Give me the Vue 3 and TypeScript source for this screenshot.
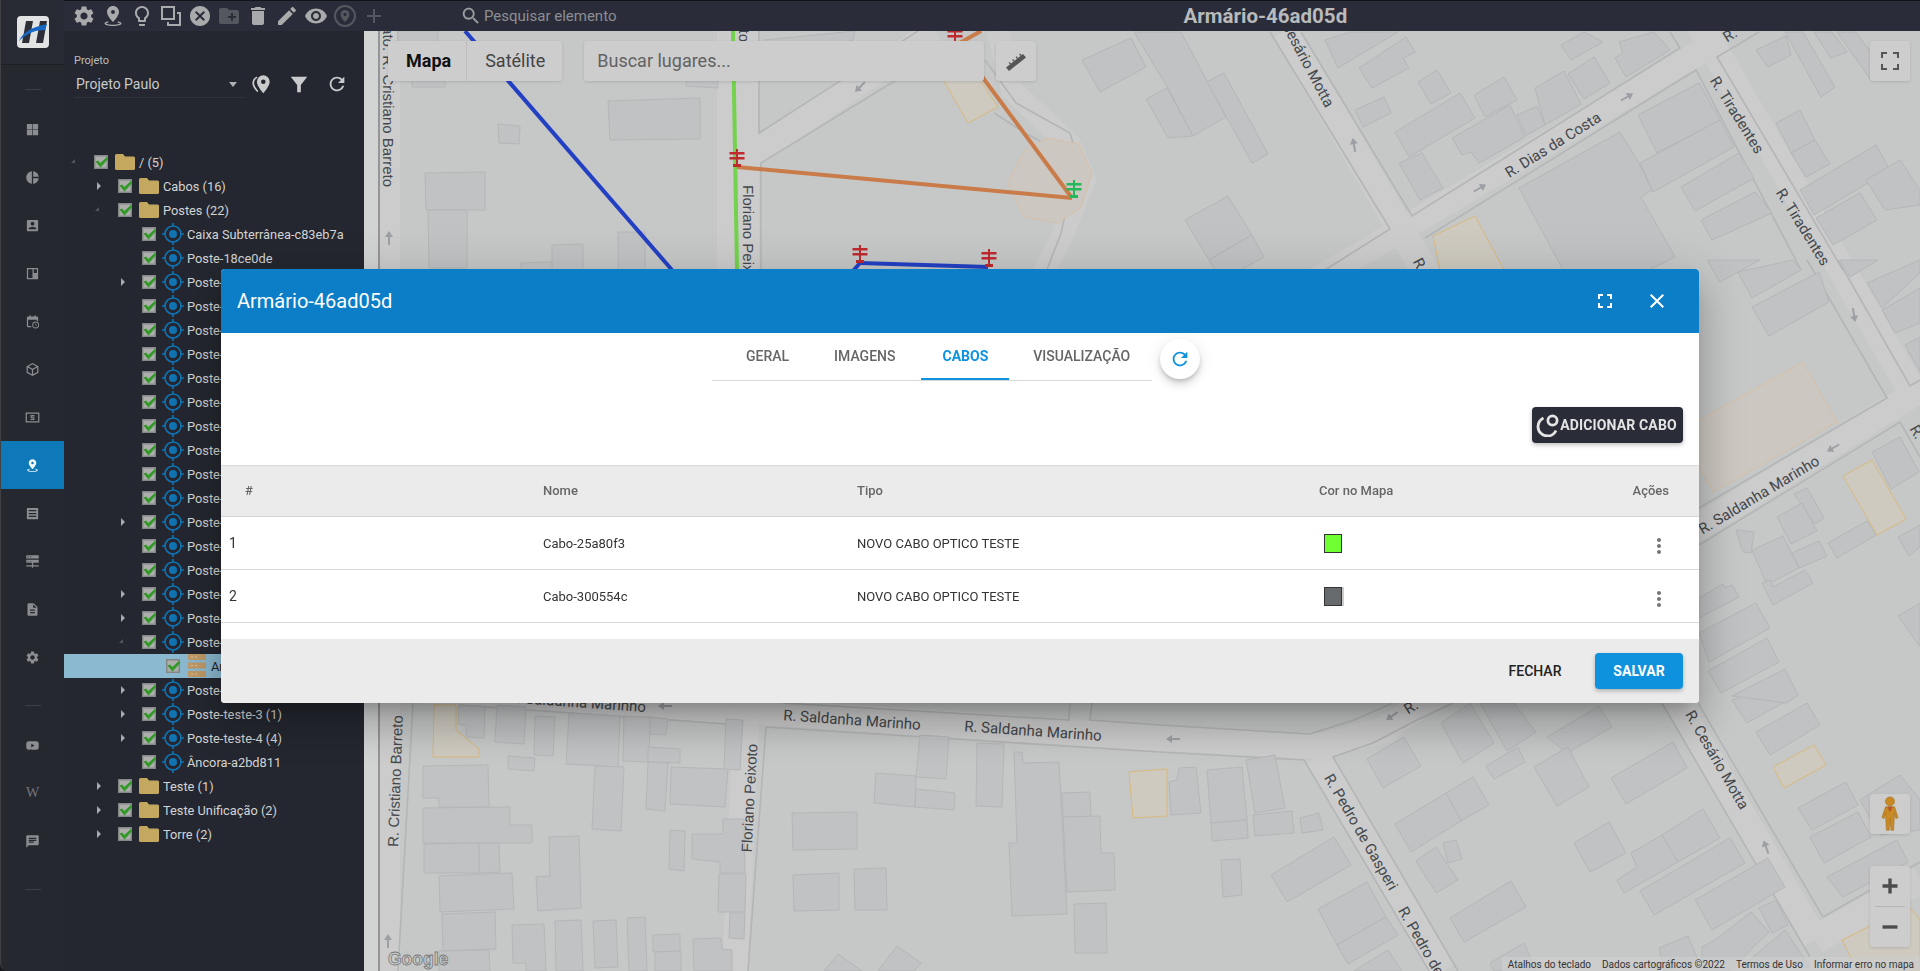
<script setup lang="ts">
const icons: Record<string, string> = {
  settings: 'M19.14 12.94c.04-.3.06-.61.06-.94 0-.32-.02-.64-.07-.94l2.03-1.58a.49.49 0 0 0 .12-.61l-1.92-3.32a.488.488 0 0 0-.59-.22l-2.39.96c-.5-.38-1.03-.7-1.62-.94l-.36-2.54a.484.484 0 0 0-.48-.41h-3.84c-.24 0-.43.17-.47.41l-.36 2.54c-.59.24-1.13.57-1.62.94l-2.39-.96c-.22-.08-.47 0-.59.22L2.74 8.87c-.12.21-.08.47.12.61l2.03 1.58c-.05.3-.09.63-.09.94s.02.64.07.94l-2.03 1.58a.49.49 0 0 0-.12.61l1.92 3.32c.12.22.37.29.59.22l2.39-.96c.5.38 1.03.7 1.62.94l.36 2.54c.05.24.24.41.48.41h3.84c.24 0 .44-.17.47-.41l.36-2.54c.59-.24 1.13-.56 1.62-.94l2.39.96c.22.08.47 0 .59-.22l1.92-3.32c.12-.22.07-.47-.12-.61l-2.01-1.58zM12 15.6c-1.98 0-3.6-1.62-3.6-3.6s1.62-3.6 3.6-3.6 3.6 1.62 3.6 3.6-1.62 3.6-3.6 3.6z',
  pinRing: 'M12 2c-3.3 0-6 2.7-6 6 0 4 6 10 6 10s6-6 6-10c0-3.3-2.7-6-6-6zm0 8a2 2 0 1 1 0-4 2 2 0 0 1 0 4zM7 17.2c-2 .5-3.5 1.3-3.5 2.3C3.5 21 7.3 22 12 22s8.5-1 8.5-2.5c0-1-1.5-1.8-3.5-2.3l-.6 1.2c1.5.3 2.4.8 2.4 1.1 0 .5-2.7 1.2-6.8 1.2s-6.8-.7-6.8-1.2c0-.3.9-.8 2.4-1.1z',
  bulb: 'M9 21c0 .55.45 1 1 1h4c.55 0 1-.45 1-1v-1H9v1zm3-19C8.14 2 5 5.14 5 9c0 2.38 1.19 4.47 3 5.74V17c0 .55.45 1 1 1h6c.55 0 1-.45 1-1v-2.26c1.81-1.27 3-3.36 3-5.74 0-3.86-3.14-7-7-7zm2.85 11.1l-.85.6V16h-4v-2.3l-.85-.6C7.8 12.16 7 10.63 7 9c0-2.76 2.24-5 5-5s5 2.24 5 5c0 1.63-.8 3.16-2.15 4.1z',
  squares: 'M2 2h14v14H2zM4 4v10h10V4zM18 8h4v14H8v-4h2v2h10V10h-2z',
  cancel: 'M12 2C6.47 2 2 6.47 2 12s4.47 10 10 10 10-4.47 10-10S17.53 2 12 2zm5 13.59L15.59 17 12 13.41 8.41 17 7 15.59 10.59 12 7 8.41 8.41 7 12 10.59 15.59 7 17 8.41 13.41 12 17 15.59z',
  newFolder: 'M20 6h-8l-2-2H4c-1.11 0-1.99.89-1.99 2L2 18c0 1.11.89 2 2 2h16c1.11 0 2-.89 2-2V8c0-1.11-.89-2-2-2zm-1 8h-3v3h-2v-3h-3v-2h3V9h2v3h3v2z',
  trash: 'M6 19c0 1.1.9 2 2 2h8c1.1 0 2-.9 2-2V7H6v12zM19 4h-3.5l-1-1h-5l-1 1H5v2h14V4z',
  edit: 'M3 17.25V21h3.75L17.81 9.94l-3.75-3.75L3 17.25zM20.71 7.04c.39-.39.39-1.02 0-1.41l-2.34-2.34c-.39-.39-1.02-.39-1.41 0l-1.83 1.83 3.75 3.75 1.83-1.83z',
  eye: 'M12 4.5C7 4.5 2.73 7.61 1 12c1.73 4.39 6 7.5 11 7.5s9.27-3.11 11-7.5c-1.73-4.39-6-7.5-11-7.5zM12 17c-2.76 0-5-2.24-5-5s2.24-5 5-5 5 2.24 5 5-2.24 5-5 5zm0-8c-1.66 0-3 1.34-3 3s1.34 3 3 3 3-1.34 3-3-1.34-3-3-3z',
  pinCircle: 'M12 1a11 11 0 1 0 0 22 11 11 0 0 0 0-22zm0 2a9 9 0 1 1 0 18 9 9 0 0 1 0-18zM12 6a4.5 4.5 0 0 0-4.5 4.5c0 3 4.5 7.5 4.5 7.5s4.5-4.5 4.5-7.5A4.5 4.5 0 0 0 12 6zm0 6a1.6 1.6 0 1 1 0-3.2 1.6 1.6 0 0 1 0 3.2z',
  add: 'M19 13h-6v6h-2v-6H5v-2h6V5h2v6h6v2z',
  search: 'M15.5 14h-.79l-.28-.27C15.41 12.59 16 11.11 16 9.5 16 5.91 13.09 3 9.5 3S3 5.91 3 9.5 5.91 16 9.5 16c1.61 0 3.09-.59 4.23-1.57l.27.28v.79l5 4.99L20.49 19l-4.99-5zm-6 0C7.01 14 5 11.99 5 9.5S7.01 5 9.5 5 14 7.01 14 9.5 11.99 14 9.5 14z',
  windows: 'M3 3h8.5v8.5H3zM12.5 3H21v8.5h-8.5zM3 12.5h8.5V21H3zM12.5 12.5H21V21h-8.5z',
  pie: 'M11 2v20c-5.07-.5-9-4.79-9-10s3.93-9.5 9-10zm2.03 0v8.99H22c-.47-4.74-4.24-8.52-8.97-8.99zm0 11.01V22c4.74-.47 8.5-4.25 8.97-8.99h-8.97z',
  contact: 'M3 5v14c0 1.1.89 2 2 2h14c1.1 0 2-.9 2-2V5c0-1.1-.9-2-2-2H5c-1.11 0-2 .9-2 2zm12 4c0 1.66-1.34 3-3 3s-3-1.34-3-3 1.34-3 3-3 3 1.34 3 3zm-9 8c0-2 4-3.1 6-3.1s6 1.1 6 3.1v1H6v-1z',
  quilt: 'M3 3h18v18H3zM5 5v14h7V5zM14 5v6h5V5z',
  calendar: 'M5 4h2V2h2v2h6V2h2v2h2a2 2 0 0 1 2 2v5h-2V9H5v10h5v2H5a2 2 0 0 1-2-2V6a2 2 0 0 1 2-2zM17 12a5.5 5.5 0 1 0 0 11 5.5 5.5 0 0 0 0-11zm0 1.5a4 4 0 1 1 0 8 4 4 0 0 1 0-8zM16.5 15v3l2.2 1.2.5-.9-1.7-.9V15z',
  cube: 'M12 1.5l9.5 5.3v10.4L12 22.5l-9.5-5.3V6.8zM5.6 7.1L12 10.7l6.4-3.6L12 3.6zM4.5 8.8v7.2l6.5 3.6v-7.2zM13 19.6l6.5-3.6V8.8L13 12.4z',
  money: 'M1 4h22v16H1zM3 6v12h18V6zM15 8h-6v4.6h4.2v1.2H9V16h6v-4.6h-4.2v-1.2H15z',
  pin: 'M12 2C8.7 2 6 4.7 6 8c0 4 6 10 6 10s6-6 6-10c0-3.3-2.7-6-6-6zm0 8a2 2 0 1 1 0-4 2 2 0 0 1 0 4zM7 17.2c-2 .5-3.5 1.3-3.5 2.3C3.5 21 7.3 22 12 22s8.5-1 8.5-2.5c0-1-1.5-1.8-3.5-2.3l-.6 1.2c1.5.3 2.4.8 2.4 1.1 0 .5-2.7 1.2-6.8 1.2s-6.8-.7-6.8-1.2c0-.3.9-.8 2.4-1.1z',
  lines: 'M3 3h18v18H3zM6 6.5v2h12v-2zM6 11v2h12v-2zM6 15.5v2h12v-2z',
  network: 'M2 2h20v5H2zM4 4v1h2V4zM8 4v1h2V4zM2 9h20v5H2zM4 11v1h2v-1zM8 11v1h2v-1zM11 14h2v4h9v2h-9v2h-2v-2H2v-2h9z',
  description: 'M14 2H6c-1.1 0-1.99.9-1.99 2L4 20c0 1.1.89 2 1.99 2H18c1.1 0 2-.9 2-2V8l-6-6zm2 16H8v-2h8v2zm0-4H8v-2h8v2zm-3-5V3.5L18.5 9H13z',
  youtube: 'M21.58 7.19c-.23-.86-.91-1.54-1.77-1.77C18.25 5 12 5 12 5s-6.25 0-7.81.42c-.86.23-1.54.91-1.77 1.77C2 8.75 2 12 2 12s0 3.25.42 4.81c.23.86.91 1.54 1.77 1.77C5.75 19 12 19 12 19s6.25 0 7.81-.42c.86-.23 1.54-.91 1.77-1.77C22 15.25 22 12 22 12s0-3.25-.42-4.81zM10 15V9l5.2 3-5.2 3z',
  chat: 'M20 2H4c-1.1 0-1.99.9-1.99 2L2 22l4-4h14c1.1 0 2-.9 2-2V4c0-1.1-.9-2-2-2zM6 9h12v2H6V9zm8 5H6v-2h8v2zm4-6H6V6h12v2z',
  pins: 'M14.5 2.5a7 7 0 0 0-7 7c0 4.8 7 12.5 7 12.5s7-7.7 7-12.5a7 7 0 0 0-7-7zm0 9.5a2.5 2.5 0 1 1 0-5 2.5 2.5 0 0 1 0 5zM7.5 3.8A8.4 8.4 0 0 0 2.5 11c0 3.6 3 7.5 5.5 10l1-1.3C6.8 17 4.5 13.7 4.5 11c0-2.4 1.3-4.6 3.6-5.7z',
  funnel: 'M3 4h18l-7 9v8h-4v-8z',
  refresh: 'M17.65 6.35C16.2 4.9 14.21 4 12 4c-4.42 0-7.99 3.58-7.99 8s3.57 8 7.99 8c3.73 0 6.84-2.55 7.73-6h-2.08c-.82 2.33-3.04 4-5.65 4-3.31 0-6-2.69-6-6s2.69-6 6-6c1.66 0 3.14.69 4.22 1.78L13 11h7V4l-2.35 2.35z',
  fullscreen: 'M7 14H5v5h5v-2H7v-3zm-2-4h2V7h3V5H5v5zm12 7h-3v2h5v-5h-2v3zM14 5v2h3v3h2V5h-5z',
  close: 'M19 6.41L17.59 5 12 10.59 6.41 5 5 6.41 10.59 12 5 17.59 6.41 19 12 13.41 17.59 19 19 17.59 13.41 12z',
  more: 'M12 8c1.1 0 2-.9 2-2s-.9-2-2-2-2 .9-2 2 .9 2 2 2zm0 2c-1.1 0-2 .9-2 2s.9 2 2 2 2-.9 2-2-.9-2-2-2zm0 6c-1.1 0-2 .9-2 2s.9 2 2 2 2-.9 2-2-.9-2-2-2z',
}

const toolbar = [
  { icon: 'settings' }, { icon: 'pinRing' }, { icon: 'bulb' }, { icon: 'squares' }, { icon: 'cancel' },
  { icon: 'newFolder', dim: true }, { icon: 'trash' }, { icon: 'edit' }, { icon: 'eye' },
  { icon: 'pinCircle', dim: true }, { icon: 'add', dim: true },
]

const railGroups = [
  [
    { icon: 'windows' }, { icon: 'pie' }, { icon: 'contact' }, { icon: 'quilt' }, { icon: 'calendar' },
    { icon: 'cube' }, { icon: 'money' }, { icon: 'pin', active: true }, { icon: 'lines' },
    { icon: 'network' }, { icon: 'description' }, { icon: 'settings' },
  ],
  [{ icon: 'youtube' }, { icon: 'wiki' }, { icon: 'chat' }],
]

type TreeRow = {
  label: string
  level: number
  toggle?: 'open' | 'closed'
  kind: 'folder' | 'target' | 'cabinet'
  selected?: boolean
}

const closedPostes = new Set([5, 15, 18, 19])
const posteRows: TreeRow[] = Array.from({ length: 16 }, (_, i) => ({
  label: `Poste-teste-${i + 5}`,
  level: 2,
  kind: 'target',
  toggle: i + 5 === 20 ? 'open' : closedPostes.has(i + 5) ? 'closed' : undefined,
}))

const tree: TreeRow[] = [
  { label: '/ (5)', level: 0, toggle: 'open', kind: 'folder' },
  { label: 'Cabos (16)', level: 1, toggle: 'closed', kind: 'folder' },
  { label: 'Postes (22)', level: 1, toggle: 'open', kind: 'folder' },
  { label: 'Caixa Subterrânea-c83eb7a', level: 2, kind: 'target' },
  { label: 'Poste-18ce0de', level: 2, kind: 'target' },
  ...posteRows,
  { label: 'Armário-46ad05d', level: 3, kind: 'cabinet', selected: true },
  { label: 'Poste-teste-2 (2)', level: 2, toggle: 'closed', kind: 'target' },
  { label: 'Poste-teste-3 (1)', level: 2, toggle: 'closed', kind: 'target' },
  { label: 'Poste-teste-4 (4)', level: 2, toggle: 'closed', kind: 'target' },
  { label: 'Âncora-a2bd811', level: 2, kind: 'target' },
  { label: 'Teste (1)', level: 1, toggle: 'closed', kind: 'folder' },
  { label: 'Teste Unificação (2)', level: 1, toggle: 'closed', kind: 'folder' },
  { label: 'Torre (2)', level: 1, toggle: 'closed', kind: 'folder' },
]

const tabs = ['GERAL', 'IMAGENS', 'CABOS', 'VISUALIZAÇÃO']

const cables = [
  { id: 1, name: 'Cabo-25a80f3', type: 'NOVO CABO OPTICO TESTE', color: '#70ff33', ghost: false },
  { id: 2, name: 'Cabo-300554c', type: 'NOVO CABO OPTICO TESTE', color: '#666a6d', ghost: true },
]

// map data, in page pixels
const roads = [
  { d: '1285,31 1815,940', w: 27 },
  { d: '1300,290 1700,52', w: 25 },
  { d: '1700,25 1920,405', w: 28 },
  { d: '1920,390 1699,527 1423,703 1385,730 1320,746 1160,738 766,712 411,690', w: 26 },
  { d: '747,700 735,971', w: 26 },
  { d: '738,31 738,280', w: 42 },
  { d: '745,160 935,31', w: 26 },
  { d: '1318,757 1443,971', w: 27 },
  { d: '389,31 389,690 389,971', w: 22 },
  { d: '1815,940 1920,880', w: 28 },
  { d: '998,31 1012,90 1070,145 1085,180 1060,240 1040,280', w: 22 },
]

const roadEdges = [
  '759,31 759,133 918,31',
  '949,43 893,82 761,163 761,280',
  '985,60 1016,103 1070,133 1078,160 1061,233 1043,280',
  '994,113 1025,133 1070,157 1074,187',
  '1270,32 1390,229 1325,270',
  '1301,32 1412,216 1680,48 1670,32',
  '1425,238 1696,70 1801,270',
  '1759,32 1717,57 1843,270',
  '1807,260 1887,398 1699,508',
  '1838,260 1910,386 1920,380',
  '1699,545 1900,422 1920,457',
  '413,703 398,971',
  '398,31 398,60',
  '459,705 727,724',
  '783,703 1069,720 1070,703',
  '1092,703 1090,720 1160,725 1310,734 1354,720 1393,703',
  '766,727 1160,752 1304,760 1429,971',
  '766,727 748,971',
  '1453,703 1417,720 1373,743 1333,757 1458,971',
  '1662,703 1810,957',
  '1698,703 1823,917 1920,862',
]

const buildings = [
  '608,101 700,98 700,139 610,140', '498,124 520,126 519,144 499,143', '425,173 485,172 485,210 426,210',
  '428,210 467,210 467,268 429,268', '618,232 645,232 645,270 618,270', '552,245 583,244 583,270 552,270',
  '521,263 552,262 552,270 521,270', '412,50 445,50 445,87 412,87', '686,60 718,60 718,88 686,86',
  '398,31 438,31 438,42 398,42', '764,40 855,31 853,40 770,65',
  '1131,38 1146,67 1100,92 1082,60', '1134,32 1181,32 1226,117 1193,136 1168,88',
  '1146,99 1167,88 1193,136 1168,138', '1207,82 1224,73 1268,154 1252,163',
  '1185,220 1228,196 1252,235 1209,260', '1209,260 1252,235 1264,257 1241,270 1215,270',
  '1325,40 1350,32 1398,32 1338,68', '1359,68 1406,37 1415,52 1403,58 1409,68 1372,88',
  '1418,82 1437,70 1451,93 1431,104', '1355,110 1384,97 1391,113 1363,127', '1395,132 1460,93 1475,118 1409,157',
  '1399,163 1422,153 1443,188 1420,200', '1474,95 1504,77 1517,100 1485,117',
  '1452,138 1510,105 1525,137 1479,163 1471,152 1462,155', '1517,115 1537,106 1545,125 1526,135',
  '1535,88 1564,71 1581,104 1545,125', '1568,74 1594,57 1610,83 1584,99', '1561,45 1584,32 1603,42 1571,60',
  '1615,58 1623,53 1619,42 1654,32 1670,50 1626,77',
  '1519,188 1620,132 1639,163 1652,190 1641,197 1675,257 1649,270 1563,270',
  '1638,115 1699,83 1720,120 1657,153', '1640,163 1720,120 1734,147 1653,192', '1681,187 1739,153 1754,178 1695,211',
  '1701,220 1755,192 1772,213 1712,240', '1756,50 1786,36 1791,55 1768,67', '1785,32 1803,32 1835,87 1821,97',
  '1814,32 1832,32 1847,52 1831,58', '1837,32 1856,32 1885,73 1871,80', '1776,123 1800,110 1815,140 1791,153',
  '1791,153 1815,140 1830,164 1806,177', '1800,190 1876,145 1890,170 1814,215', '1816,218 1860,193 1877,220 1833,245',
  '1866,180 1900,160 1920,190 1920,205 1885,210',
  '459,705 485,707 484,738 466,737 466,725 458,724', '497,705 526,707 524,744 495,742',
  '535,716 555,717 553,756 534,755', '508,756 535,758 534,771 508,769', '569,713 620,716 618,767 566,764',
  '595,766 624,767 621,831 592,829', '624,716 651,717 648,762 623,761', '650,717 668,719 666,735 650,734',
  '648,747 680,749 680,763 648,762', '648,762 668,763 665,811 646,809', '671,767 728,769 725,807 670,804',
  '726,719 743,720 740,770 724,769', '423,766 488,765 489,807 439,807 439,798 423,798',
  '423,808 510,807 510,825 532,825 532,843 423,843', '424,844 479,843 479,873 424,873', '479,843 499,843 500,872 479,873',
  '439,876 512,873 514,909 440,912', '442,914 495,912 496,949 443,951', '439,951 489,950 490,971 439,971',
  '549,837 579,836 581,908 538,911 536,877 550,876', '512,925 544,924 546,971 526,971 526,963 513,963',
  '555,921 581,920 583,971 556,971', '593,921 616,920 618,967 595,968', '627,918 645,917 647,971 629,971',
  '670,830 685,831 684,871 669,869', '653,935 680,934 680,952 653,952', '655,952 681,951 681,971 655,971',
  '693,939 721,938 722,949 732,950 732,971 694,971', '692,834 723,834 723,819 744,819 745,873 720,873 720,862 692,859',
  '719,874 746,874 745,912 718,912', '730,913 745,913 744,939 729,938',
  '920,735 949,737 946,779 916,777', '876,773 916,776 915,807 874,803', '916,789 955,793 954,810 915,807',
  '977,743 1004,744 1002,807 976,806', '792,813 857,812 857,849 793,850', '793,875 839,873 839,910 794,911',
  '854,869 886,868 887,910 855,910', '1014,752 1022,752 1023,763 1059,762 1067,914 1012,916 1009,843 1017,843',
  '1062,793 1090,792 1091,817 1063,817', '1063,817 1100,816 1101,853 1114,853 1115,890 1067,892',
  '1074,904 1106,903 1107,953 1075,953', '824,971 838,954 862,971', '878,971 897,946 921,963 914,971',
  '1169,782 1177,780 1179,768 1196,767 1201,813 1171,815', '1207,770 1242,767 1247,820 1211,823',
  '1211,823 1247,820 1248,838 1212,841', '1246,760 1275,755 1285,808 1255,813', '1253,815 1292,811 1294,833 1255,836',
  '1300,818 1319,813 1323,830 1302,833', '1221,860 1240,859 1242,895 1223,897', '1271,875 1334,837 1351,865 1287,902',
  '1318,909 1367,882 1386,917 1337,945', '1337,945 1386,917 1398,935 1348,964', '1354,971 1388,950 1402,971',
  '1367,759 1404,737 1421,766 1383,788', '1395,824 1446,793 1461,821 1411,852', '1446,793 1473,777 1489,805 1461,821',
  '1416,861 1436,847 1458,880 1436,893', '1443,843 1456,840 1462,859 1448,863', '1450,918 1511,881 1526,907 1464,942',
  '1490,963 1524,943 1536,971 1494,971', '1441,723 1470,703 1494,743 1463,763', '1480,703 1514,703 1536,732 1507,751',
  '1486,766 1518,747 1525,762 1494,779', '1547,737 1599,706 1612,727 1567,753', '1534,767 1568,747 1589,787 1557,806',
  '1611,778 1673,742 1687,768 1626,804', '1574,843 1609,822 1626,853 1590,872',
  '1617,880 1637,867 1631,853 1662,835 1678,862 1624,893', '1662,835 1703,809 1720,838 1678,862',
  '1640,891 1730,838 1745,863 1654,915', '1695,900 1768,858 1785,887 1712,930', '1759,908 1776,900 1788,925 1772,933',
  '1702,947 1715,940 1751,912 1769,932 1729,971 1702,971', '1659,948 1688,936 1698,960 1664,971', '1741,967 1785,930 1810,967',
  '1732,700 1790,680 1797,695 1747,723', '1756,732 1807,703 1820,725 1770,755', '1798,808 1846,782 1858,805 1812,830',
  '1810,837 1858,812 1871,837 1824,863', '1827,877 1897,840 1908,862 1843,897', '1860,800 1900,775 1920,800 1920,830 1880,835',
  '1707,260 1760,260 1720,282', '1738,272 1793,260 1801,270 1752,298', '1752,307 1819,272 1829,302 1769,336',
  '1867,283 1920,260 1920,273 1882,308', '1882,310 1920,288 1920,323 1895,333', '1905,345 1920,337 1920,372',
  '1840,260 1878,260 1850,277', '1872,452 1900,437 1919,472 1891,489', '1828,543 1867,521 1876,535 1837,558',
  '1898,537 1920,525 1920,547 1909,556', '1898,616 1920,603 1920,647', '1794,494 1807,488 1824,518 1815,524',
  '1777,517 1802,503 1817,531 1791,544', '1736,530 1754,532 1751,553 1743,552',
  '1752,550 1783,536 1799,568 1772,582 1765,580', '1792,553 1819,541 1827,556 1799,568',
  '1762,583 1770,580 1773,587 1805,570 1813,583 1773,605', '1699,598 1723,584 1725,588 1732,585 1739,597 1699,618',
  '1699,633 1756,603 1770,628 1709,662', '1708,671 1767,638 1779,662 1721,693', '1732,696 1785,669 1798,695 1787,703',
]

const lots = [
  { points: '945,83 968,123 998,107 980,80 960,40 925,55', tone: 'yellow' },
  { points: '1047,138 1079,144 1092,173 1081,208 1058,223 1024,217 1007,183 1025,150', tone: 'soft' },
  { points: '1433,236 1475,216 1504,270 1440,270', tone: 'yellow' },
  { points: '434,705 456,705 456,730 479,749 479,757 433,757', tone: 'yellow' },
  { points: '1129,772 1167,769 1167,816 1133,818', tone: 'yellow' },
  { points: '1773,767 1814,745 1826,765 1784,788', tone: 'yellow' },
  { points: '1699,420 1803,362 1837,422 1713,492 1699,467', tone: 'soft' },
  { points: '1843,476 1872,460 1906,519 1877,535', tone: 'yellow' },
  { points: '1842,940 1909,907 1920,920 1920,971 1858,971', tone: 'yellow' },
]

const cableLines = [
  { points: '465,31 672,270', color: '#2340c4' },
  { points: '733,31 737,270', color: '#74d24c' },
  { points: '958,44 981,31', color: '#c97c4a' },
  { points: '958,44 1072,198', color: '#c97c4a' },
  { points: '737,167 1072,198', color: '#c97c4a' },
  { points: '860,263 988,267', color: '#2340c4' },
  { points: '860,263 852,272', color: '#2340c4' },
]

const poles = [
  { x: 737, y: 157, color: '#bf2a2e' },
  { x: 860, y: 253, color: '#bf2a2e' },
  { x: 989, y: 257, color: '#bf2a2e' },
  { x: 955, y: 35, color: '#bf2a2e' },
  { x: 1074, y: 188, color: '#24b85a' },
]

const labels = [
  { text: 'ato. R. Cristiano Barreto', x: 388, y: 187, r: 90, anchor: 'end', wide: true },
  { text: 'Floriano Peixoto', x: 748, y: 185, r: 90, anchor: 'start', wide: true },
  { text: 'Floriano Peixoto', x: 744, y: 42, r: 90, anchor: 'end', wide: true },
  { text: 'Floriano Peixoto', x: 749, y: 798, r: -87, anchor: 'middle', wide: true },
  { text: 'R. Cristiano Barreto', x: 395, y: 781, r: -88, anchor: 'middle', wide: true },
  { text: 'R. Saldanha Marinho', x: 646, y: 707, r: 4, anchor: 'end' },
  { text: 'R. Saldanha Marinho', x: 852, y: 720, r: 4, anchor: 'middle' },
  { text: 'R. Saldanha Marinho', x: 1033, y: 731, r: 4, anchor: 'middle' },
  { text: 'R. Saldanha Marinho', x: 1759, y: 495, r: -31, anchor: 'middle' },
  { text: 'R. Cesário Motta', x: 1330, y: 106, r: 62, anchor: 'end' },
  { text: 'R. Cesário Motta', x: 1717, y: 760, r: 60, anchor: 'middle' },
  { text: 'R. Dias da Costa', x: 1553, y: 145, r: -32, anchor: 'middle' },
  { text: 'R. Tiradentes', x: 1737, y: 115, r: 58, anchor: 'middle' },
  { text: 'R. Tiradentes', x: 1803, y: 227, r: 58, anchor: 'middle' },
  { text: 'R.', x: 1730, y: 35, r: -32, anchor: 'middle' },
  { text: 'R.', x: 1420, y: 265, r: 62, anchor: 'middle' },
  { text: 'R.', x: 1411, y: 707, r: -32, anchor: 'middle' },
  { text: 'R.', x: 1917, y: 432, r: 60, anchor: 'middle' },
  { text: 'R. Pedro de Gasperi', x: 1361, y: 832, r: 60, anchor: 'middle' },
  { text: 'R. Pedro de Gasperi', x: 1402, y: 908, r: 60, anchor: 'start' },
]

const arrows = [
  { x: 389, y: 238, r: 0 }, { x: 860, y: 87, r: 225 }, { x: 1354, y: 145, r: -10 }, { x: 1480, y: 188, r: 60 },
  { x: 1627, y: 97, r: 60 }, { x: 1854, y: 315, r: 170 }, { x: 1833, y: 448, r: 240 }, { x: 665, y: 706, r: 270 },
  { x: 388, y: 941, r: 0 }, { x: 1173, y: 739, r: 270 }, { x: 1392, y: 716, r: 235 }, { x: 1766, y: 847, r: -20 },
]

const credits = ['Atalhos do teclado', 'Dados cartográficos ©2022', 'Termos de Uso', 'Informar erro no mapa']
</script>

<template>
  <div class="shell">
    <aside class="rail">
      <div class="rail-logo">
        <svg class="logo" viewBox="0 0 32 32">
          <rect width="32" height="32" rx="4" fill="#e2e3e3" />
          <path d="M5 27L9 5h7l-4 22zM19 27l4-22h7l-4 22z" fill="#2c2f37" />
          <path d="M2 25C6 16 15 11 30 8l-2 6c-9 0-18 3-26 11z" fill="#1668c4" />
        </svg>
      </div>
      <template v-for="(group, g) in railGroups" :key="g">
        <div class="rail-sep"></div>
        <nav class="rail-group">
          <div v-for="(item, i) in group" :key="i" class="rail-item" :class="{ active: 'active' in item }">
            <span v-if="item.icon === 'wiki'" class="wiki">W</span>
            <svg v-else viewBox="0 0 24 24"><path :d="icons[item.icon]" fill-rule="evenodd" /></svg>
          </div>
        </nav>
      </template>
      <div class="rail-sep"></div>
    </aside>

    <div class="main">
      <header class="topbar">
        <div class="tools">
          <svg v-for="tool in toolbar" :key="tool.icon" class="tool" :class="{ dim: tool.dim }" viewBox="0 0 24 24">
            <path :d="icons[tool.icon]" fill-rule="evenodd" />
          </svg>
        </div>
        <div class="top-search">
          <svg viewBox="0 0 24 24"><path :d="icons.search" /></svg>
          <span>Pesquisar elemento</span>
        </div>
        <h1 class="top-title">Armário-46ad05d</h1>
      </header>

      <div class="workspace">
        <section class="panel">
          <div class="project">
            <div class="project-field">
              <label>Projeto</label>
              <div class="project-select">
                <span>Projeto Paulo</span>
                <i class="caret"></i>
              </div>
            </div>
            <svg viewBox="0 0 24 24" class="project-icon"><path :d="icons.pins" fill-rule="evenodd" /></svg>
            <svg viewBox="0 0 24 24" class="project-icon"><path :d="icons.funnel" /></svg>
            <svg viewBox="0 0 24 24" class="project-icon"><path :d="icons.refresh" /></svg>
          </div>

          <ul class="tree">
            <li
              v-for="row in tree"
              :key="row.label"
              class="tree-row"
              :class="{ selected: row.selected }"
              :style="{ paddingLeft: 5 + row.level * 24 + 'px' }"
            >
              <span class="toggle" :class="row.toggle"></span>
              <svg class="check" viewBox="0 0 14 14">
                <rect x=".75" y=".75" width="12.5" height="12.5" fill="#adaead" stroke="#858686" stroke-width="1.5" />
                <path d="M1.500 6.800l2.500-1.400L6.500 8l6-5.800 2 1.400-8 9z" fill="#2f9a25" />
              </svg>
              <svg v-if="row.kind === 'folder'" class="node folder" viewBox="0 0 20 16">
                <path d="M1.5 0H8l2 2.5h8.5A1.5 1.5 0 0 1 20 4v10.5a1.5 1.5 0 0 1-1.5 1.5h-17A1.5 1.5 0 0 1 0 14.5v-13A1.5 1.5 0 0 1 1.5 0z" fill="#c5a85f" />
              </svg>
              <svg v-else-if="row.kind === 'target'" class="node target" viewBox="0 0 22 22">
                <circle cx="11" cy="11" r="8" fill="none" stroke="#1173b3" stroke-width="1.6" />
                <circle cx="11" cy="11" r="4" fill="#1173b3" />
                <path d="M11 0v4M11 18v4M0 11h4M18 11h4" stroke="#1173b3" stroke-width="1.6" />
              </svg>
              <svg v-else class="node cabinet" viewBox="0 0 18 24">
                <path d="M0 0h18v6H0zM0 8.500h18v6H0zM0 17h18v6H0z" fill="#c09a67" />
                <path d="M3 2.500h2v1H3zM7 2.500h2v1H7zM3 11h2v1H3zM7 11h2v1H7zM3 19.500h2v1H3zM7 19.500h2v1H7z" fill="#e3c79a" />
              </svg>
              <span class="tree-label">{{ row.label }}</span>
            </li>
          </ul>
        </section>

        <section class="map">
          <svg class="map-canvas" viewBox="364 31 1556 940" preserveAspectRatio="none">
            <rect x="364" y="31" width="1556" height="940" fill="#c6c8c7" />
            <rect x="364" y="31" width="15" height="940" fill="#d2d3d3" />
            <polyline v-for="(road, i) in roads" :key="'r' + i" :points="road.d" fill="none" stroke="#cbcccb" :stroke-width="road.w" />
            <polyline v-for="(edge, i) in roadEdges" :key="'e' + i" :points="edge" fill="none" stroke="#b3b5b7" stroke-width="1.6" />
            <line x1="379" y1="31" x2="379" y2="971" stroke="#85878a" stroke-width="1.6" />
            <polygon v-for="(points, i) in buildings" :key="'b' + i" :points="points" fill="#c0c2c3" stroke="#b4b6b8" stroke-width="1" />
            <polygon v-for="(lot, i) in lots" :key="'l' + i" :points="lot.points" :class="lot.tone" stroke-width="1" />
            <path
              v-for="(arrow, i) in arrows"
              :key="'a' + i"
              d="M0-7l4 6H1v8h-2v-8h-3z"
              fill="#9c9fa4"
              :transform="`translate(${arrow.x} ${arrow.y}) rotate(${arrow.r})`"
            />
            <text
              v-for="(label, i) in labels"
              :key="'t' + i"
              class="map-label"
              :class="{ wide: label.wide }"
              :text-anchor="label.anchor"
              :transform="`translate(${label.x} ${label.y}) rotate(${label.r})`"
              dominant-baseline="central"
            >{{ label.text }}</text>
            <polyline v-for="(cable, i) in cableLines" :key="'c' + i" :points="cable.points" fill="none" :stroke="cable.color" stroke-width="4" />
            <g v-for="(pole, i) in poles" :key="'p' + i" :fill="pole.color" :transform="`translate(${pole.x} ${pole.y})`">
              <rect x="-7.500" y="-5" width="15" height="2.500" />
              <rect x="-7.500" y="0" width="15" height="2.500" />
              <rect x="-1" y="-8" width="2" height="15" />
              <rect x="-4" y="7" width="8" height="3" />
            </g>
            <text class="google" x="388" y="965">Google</text>
          </svg>

          <div class="map-top">
            <div class="map-type">
              <span class="type active">Mapa</span>
              <span class="type">Satélite</span>
            </div>
            <div class="map-search">Buscar lugares...</div>
            <div class="map-btn">
              <svg viewBox="0 0 24 24">
                <path d="M2 18.500L19 5l3 3.500L5 22zM6 15.300L4.600 13.700l1-.8L7 14.500zM9.500 12.500L8.100 10.900l1-.8 1.400 1.600zM13 9.700l-1.400-1.600 1-.8L14 8.900zM16.500 6.900l-1.400-1.600 1-.8L17.500 6.100z" fill="#555" />
              </svg>
            </div>
            <div class="map-btn push">
              <svg viewBox="0 0 24 24">
                <path d="M3 9V3h6v2H5v4zM15 3h6v6h-2V5h-4zM3 15h2v4h4v2H3zM19 15h2v6h-6v-2h4z" fill="#555" />
              </svg>
            </div>
          </div>

          <div class="map-side">
            <div class="map-btn tall">
              <svg viewBox="0 0 24 40" class="pegman">
                <circle cx="12" cy="6" r="5" fill="#c98a25" stroke="#9c6a18" stroke-width=".6" />
                <path d="M7 12h10l4 12-2.500 1-1.500-6-1 19h-3l-1-13-1 13H8L7 19l-1.500 6L3 24z" fill="#c98a25" stroke="#9c6a18" stroke-width=".6" />
                <path d="M9 12h6l-3 6z" fill="#b4552a" />
              </svg>
            </div>
            <div class="map-zoom">
              <div class="zoom-btn"><svg viewBox="0 0 24 24"><path d="M10 3h4v7h7v4h-7v7h-4v-7H3v-4h7z" fill="#4c4c4c" /></svg></div>
              <i class="zoom-sep"></i>
              <div class="zoom-btn"><svg viewBox="0 0 24 24"><path d="M3 10h18v4H3z" fill="#4c4c4c" /></svg></div>
            </div>
          </div>

          <div class="map-credits">
            <span v-for="item in credits" :key="item">{{ item }}</span>
          </div>
        </section>
      </div>
    </div>

    <div class="backdrop">
      <div class="dialog">
        <header class="dialog-head">
          <h2>Armário-46ad05d</h2>
          <div class="dialog-actions">
            <svg viewBox="0 0 24 24"><path :d="icons.fullscreen" /></svg>
            <svg viewBox="0 0 24 24"><path :d="icons.close" /></svg>
          </div>
        </header>

        <div class="dialog-body">
          <div class="tabs-row">
            <div class="tabs">
              <button v-for="tab in tabs" :key="tab" class="tab" :class="{ active: tab === 'CABOS' }">{{ tab }}</button>
            </div>
            <button class="round-btn">
              <svg viewBox="0 0 24 24"><path :d="icons.refresh" /></svg>
            </button>
          </div>

          <div class="table-actions">
            <button class="add-btn">
              <svg viewBox="0 0 24 24">
                <circle cx="16.500" cy="7.500" r="4.600" fill="none" stroke="#e4e4e4" stroke-width="2.800" />
                <path d="M7.500 5A10 10 0 0 0 2 13.500C2 19 6.500 23 11.500 23c3.800 0 7-2.200 8.500-5.500" fill="none" stroke="#e4e4e4" stroke-width="2.800" />
              </svg>
              ADICIONAR CABO
            </button>
          </div>

          <div class="table">
            <div class="table-head">
              <span class="col-id">#</span>
              <span>Nome</span>
              <span>Tipo</span>
              <span>Cor no Mapa</span>
              <span class="col-actions">Ações</span>
            </div>
            <div v-for="cable in cables" :key="cable.id" class="table-row">
              <span class="col-num">{{ cable.id }}</span>
              <span>{{ cable.name }}</span>
              <span>{{ cable.type }}</span>
              <span><i class="swatch" :class="{ ghost: cable.ghost }" :style="{ background: cable.color }"></i></span>
              <span class="col-more"><svg viewBox="0 0 24 24"><path :d="icons.more" /></svg></span>
            </div>
          </div>
        </div>

        <footer class="dialog-foot">
          <button class="text-btn">FECHAR</button>
          <button class="save-btn">SALVAR</button>
        </footer>
      </div>
    </div>
  </div>
</template>

<style>
html,
body {
  margin: 0;
  height: 100%;
  overflow: hidden;
  background: #17181d;
}
</style>

<style scoped>
.shell {
  display: flex;
  width: 1920px;
  height: 971px;
  overflow: hidden;
  font-family: Roboto, "Liberation Sans", sans-serif;
}

.rail {
  flex: 0 0 64px;
  box-sizing: border-box;
  border-left: 1px solid #3f4147;
  border-bottom-left-radius: 8px;
  background: #25282f;
  display: flex;
  flex-direction: column;
  align-items: center;
}
.rail-logo {
  align-self: stretch;
  height: 65px;
  flex: none;
  box-sizing: border-box;
  border-bottom: 1px solid #1d1f25;
  background: #272a32;
  display: flex;
  align-items: center;
  justify-content: center;
}
.logo {
  width: 32px;
  height: 32px;
}
.rail-sep {
  width: 16px;
  height: 1px;
  flex: none;
  background: #3e4047;
  margin-top: 24px;
}
.rail-group {
  align-self: stretch;
  margin-top: 15px;
}
.rail-item {
  height: 48px;
  display: flex;
  align-items: center;
  justify-content: center;
  fill: #8b8d90;
}
.rail-item svg {
  width: 15px;
  height: 15px;
}
.rail-item.active {
  background: #0e79b8;
  fill: #f2f7fa;
}
.wiki {
  font: 14px "Liberation Serif", serif;
  color: #75777b;
}

.main {
  flex: 1;
  min-width: 0;
  display: flex;
  flex-direction: column;
}
.topbar {
  height: 31px;
  flex: none;
  box-sizing: border-box;
  border-top: 1px solid #121318;
  background: #2a2d39;
  display: flex;
  align-items: center;
}
.tools {
  display: flex;
  gap: 5px;
  padding-left: 8px;
}
.tool {
  width: 24px;
  height: 24px;
  fill: #a9aaab;
}
.tool.dim {
  fill: #55575f;
}
.top-search {
  display: flex;
  align-items: center;
  gap: 2px;
  margin-left: 74px;
  color: #8c8e93;
  font-size: 15px;
}
.top-search svg {
  width: 22px;
  height: 22px;
  fill: #9a9ca0;
}
.top-title {
  margin: 0 0 0 567px;
  font-size: 20.500px;
  font-weight: 700;
  color: #b8babc;
  white-space: nowrap;
}

.workspace {
  flex: 1;
  min-height: 0;
  display: flex;
}
.panel {
  flex: 0 0 300px;
  background: #24272f;
  overflow: hidden;
}
.project {
  display: flex;
  align-items: flex-end;
  padding: 23px 0 0 10px;
}
.project-field {
  width: 171px;
  margin-right: -3px;
}
.project-field label {
  display: block;
  font-size: 11px;
  line-height: 14px;
  color: #bcbdbf;
}
.project-select {
  margin-top: 3px;
  height: 27px;
  box-sizing: border-box;
  border-bottom: 1px solid #2f323a;
  padding-left: 2px;
  display: flex;
  align-items: center;
  justify-content: space-between;
  font-size: 14px;
  color: #c9cacb;
}
.caret {
  margin-right: 8px;
  border: 4px solid transparent;
  border-top: 5px solid #b0b1b3;
  border-bottom: 0;
}
.project-icon {
  width: 22px;
  height: 22px;
  fill: #c9cacb;
  margin: 0 8px 3px;
  flex: none;
}
.tree {
  list-style: none;
  margin: 52px 0 0;
  padding: 0;
}
.tree-row {
  height: 24px;
  display: flex;
  align-items: center;
  box-sizing: border-box;
}
.tree-row.selected {
  background: #8bb9d0;
  color: #222;
}
.toggle {
  width: 12px;
  height: 12px;
  flex: none;
  margin-right: 13px;
  position: relative;
}
.toggle.closed::before {
  content: "";
  position: absolute;
  left: 4px;
  top: 2px;
  border: 4px solid transparent;
  border-left: 4px solid #a8a9ab;
  border-right: 0;
}
.toggle.open::before {
  content: "";
  position: absolute;
  left: 2px;
  top: 3px;
  border-right: 4px solid #55575c;
  border-top: 4px solid transparent;
}
.check {
  width: 14px;
  height: 14px;
  flex: none;
  overflow: visible;
}
.node {
  flex: none;
  display: block;
}
.folder {
  width: 20px;
  height: 16px;
  margin: 0 4px 0 7px;
}
.target {
  width: 22px;
  height: 22px;
  margin: 0 3px 0 6px;
}
.cabinet {
  width: 18px;
  height: 24px;
  margin: 0 5px 0 8px;
}
.tree-label {
  font-size: 12.800px;
  color: #d3d4d5;
  white-space: nowrap;
}
.selected .tree-label {
  color: #1e2229;
}

.map {
  flex: 1;
  position: relative;
  overflow: hidden;
}
.map-canvas {
  position: absolute;
  inset: 0;
  width: 100%;
  height: 100%;
}
.yellow {
  fill: #cecac0;
  stroke: #d9b97c;
}
.soft {
  fill: #ccc7c0;
  stroke: #d6c0a8;
}
.map-label {
  font-family: Roboto, sans-serif;
  font-size: 15px;
  fill: #44474c;
}
.map-label.wide {
  font-family: "Liberation Sans", sans-serif;
  font-size: 15px;
}
.google {
  font: 700 17.500px "Liberation Sans", sans-serif;
  fill: #c9cac9;
  stroke: #77797b;
  stroke-width: 0.8;
}
.map-top {
  position: absolute;
  top: 10px;
  left: 24px;
  right: 10px;
  display: flex;
  gap: 22px;
}
.map-type,
.map-search,
.map-btn,
.map-zoom {
  background: #cdcdcd;
  border-radius: 3px;
  box-shadow: 0 1px 3px rgba(0, 0, 0, 0.12);
}
.map-type {
  display: flex;
  height: 40px;
}
.type {
  display: flex;
  align-items: center;
  box-sizing: border-box;
  padding: 0 17px 2px 18px;
  font-size: 18px;
  color: #444;
}
.type.active {
  font-weight: 700;
  color: #111;
  border-right: 1px solid #bdbdbd;
  padding: 0 15px 2px 18px;
}
.map-search {
  width: 400px;
  height: 40px;
  box-sizing: border-box;
  padding: 0 0 2px 13px;
  display: flex;
  align-items: center;
  font-size: 18px;
  color: #626262;
}
.map-btn {
  width: 40px;
  height: 40px;
  display: flex;
  align-items: center;
  justify-content: center;
  margin-left: -10px;
}
.map-btn svg {
  width: 24px;
  height: 24px;
}
.map-btn.push {
  margin-left: auto;
}
.map-side {
  position: absolute;
  right: 10px;
  bottom: 24px;
  display: flex;
  flex-direction: column;
  gap: 32px;
}
.map-btn.tall {
  margin-left: 0;
}
.map-btn .pegman {
  width: 22px;
  height: 36px;
}
.map-zoom {
  width: 40px;
  height: 81px;
  display: flex;
  flex-direction: column;
  align-items: center;
}
.zoom-btn {
  height: 40px;
  display: flex;
  align-items: center;
  justify-content: center;
}
.zoom-btn svg {
  width: 20px;
  height: 20px;
}
.zoom-sep {
  width: 30px;
  height: 1px;
  flex: none;
  background: #b5b5b5;
}
.map-credits {
  position: absolute;
  right: 0;
  bottom: 0;
  display: flex;
  gap: 11px;
  padding: 0 6px;
  height: 14px;
  align-items: center;
  background: rgba(205, 205, 205, 0.7);
  font-size: 10px;
  color: #333;
}

.backdrop {
  position: fixed;
  inset: 0;
  display: flex;
  align-items: center;
  justify-content: center;
}
.dialog {
  width: 1478px;
  height: 434px;
  display: flex;
  flex-direction: column;
  overflow: hidden;
  border-radius: 4px;
  background: #fff;
  box-shadow: 0 11px 15px -7px rgba(0, 0, 0, 0.2), 0 24px 38px 3px rgba(0, 0, 0, 0.14), 0 9px 46px 8px rgba(0, 0, 0, 0.12);
}
.dialog-head {
  height: 64px;
  flex: none;
  background: #0b7ec7;
  color: #fff;
  display: flex;
  align-items: center;
  justify-content: space-between;
  padding: 0 30px 0 16px;
}
.dialog-head h2 {
  margin: 0;
  font-size: 20px;
  font-weight: 400;
}
.dialog-actions {
  display: flex;
  gap: 28px;
}
.dialog-actions svg {
  width: 24px;
  height: 24px;
  fill: #fff;
}
.dialog-body {
  flex: 1;
  min-height: 0;
}
.tabs-row {
  display: flex;
  justify-content: center;
  padding-right: 8px;
}
.tabs {
  display: flex;
  gap: 5px;
  padding-left: 14px;
  width: 440px;
  box-sizing: border-box;
  height: 48px;
  border-bottom: 1px solid #d9d9d9;
}
.tab {
  border: 0;
  background: none;
  padding: 0 20px;
  height: 47px;
  box-sizing: border-box;
  font: 500 14px Roboto, sans-serif;
  color: #666;
  white-space: nowrap;
}
.tab.active {
  color: #0f92de;
  box-shadow: inset 0 -2px 0 #0f92de;
  font-weight: 700;
  padding: 0 21px;
  margin: 0 -1px 0 1px;
}
.round-btn {
  width: 40px;
  height: 40px;
  margin: 6px 0 0 8px;
  border: 0;
  padding: 0;
  border-radius: 50%;
  background: #fff;
  box-shadow: 0 3px 5px -1px rgba(0, 0, 0, 0.2), 0 6px 10px 0 rgba(0, 0, 0, 0.1), 0 1px 18px 0 rgba(0, 0, 0, 0.08);
  display: flex;
  align-items: center;
  justify-content: center;
}
.round-btn svg {
  width: 22px;
  height: 22px;
  fill: #0f92de;
}
.table-actions {
  display: flex;
  justify-content: flex-end;
  margin-top: 26px;
  padding-right: 16px;
}
.add-btn {
  width: 151px;
  height: 36px;
  border: 0;
  border-radius: 4px;
  background: #2a2d38;
  color: #e4e4e4;
  font: 700 14px Roboto, sans-serif;
  letter-spacing: 0.15px;
  display: flex;
  align-items: center;
  justify-content: center;
  padding: 0;
  box-shadow: 0 2px 4px rgba(0, 0, 0, 0.25);
}
.add-btn svg {
  width: 24px;
  height: 24px;
  flex: none;
  margin-left: -2px;
}
.table {
  margin-top: 22px;
}
.table-head,
.table-row {
  display: grid;
  grid-template-columns: 322px 314px 462px 1fr;
  grid-auto-flow: column;
  align-items: center;
  box-sizing: border-box;
  font-size: 13px;
}
.table-head {
  height: 52px;
  border-top: 1px solid #d9d9d9;
  border-bottom: 1px solid #d4d4d4;
  background: #ebebeb;
  color: #666;
  font-weight: 500;
}
.table-row {
  height: 53px;
  padding-top: 1px;
  border-bottom: 1px solid #d9d9d9;
  color: #333;
}
.col-id {
  padding-left: 24px;
}
.col-num {
  padding-left: 8px;
  font-size: 14px;
}
.col-actions {
  justify-self: end;
  padding-right: 30px;
}
.col-more {
  justify-self: end;
  padding: 6px 28px 0 0;
  height: 24px;
}
.col-more svg {
  width: 24px;
  height: 24px;
  fill: #757575;
  display: block;
}
.swatch {
  display: block;
  box-sizing: border-box;
  width: 18px;
  height: 19px;
  border: 1px solid #333;
  margin-left: 5px;
}
.swatch.ghost {
  box-shadow: 2px 0 0 #ccc;
}
.dialog-foot {
  height: 64px;
  flex: none;
  background: #ebebeb;
  display: flex;
  align-items: center;
  justify-content: flex-end;
  gap: 17px;
  padding-right: 16px;
}
.text-btn,
.save-btn {
  height: 36px;
  border: 0;
  border-radius: 4px;
  font: 700 14px Roboto, sans-serif;
  padding: 0;
}
.text-btn {
  width: 86px;
  background: none;
  color: #222;
  font-weight: 500;
}
.save-btn {
  width: 88px;
  background: #0f92de;
  color: #fff;
  box-shadow: 0 2px 4px rgba(0, 0, 0, 0.25);
}
</style>
